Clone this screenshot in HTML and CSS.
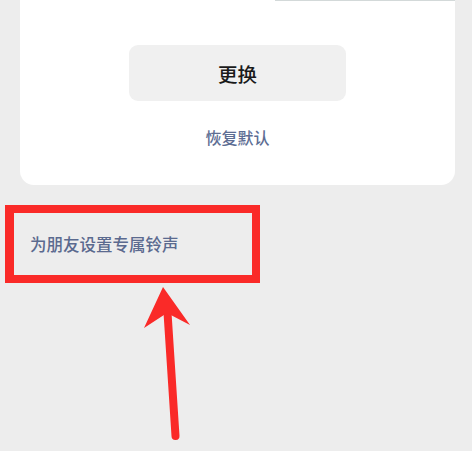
FILE: index.html
```html
<!DOCTYPE html>
<html lang="zh-CN">
<head>
<meta charset="utf-8">
<link rel="stylesheet" href="styles.css">
</head>
<body>
<div class="page">
  <div class="top-line"></div>
  <div class="card">
    <div class="btn">更换</div>
    <div class="reset">恢复默认</div>
  </div>
  <div class="friend">为朋友设置专属铃声</div>
  <div class="highlight"></div>
  <svg class="arrow" width="472" height="451" viewBox="0 0 472 451">
    <line x1="167" y1="305" x2="175.5" y2="436" stroke="#fa2a28" stroke-width="8" stroke-linecap="round"/>
    <polygon points="163,287 190,325 167,313 144,328" fill="#fa2a28"/>
  </svg>
</div>
</body>
</html>
```
FILE: styles.css
```css
html, body {
  margin: 0;
  padding: 0;
}
body {
  background: #ededed;
  font-family: "Noto Sans CJK SC", "Noto Sans", sans-serif;
}
.page {
  position: relative;
  width: 472px;
  height: 451px;
  overflow: hidden;
}
.top-line {
  position: absolute;
  top: 0;
  left: 275px;
  width: 180px;
  height: 1px;
  background: #d3d9d9;
}
.card {
  margin-left: 20px;
  width: 435px;
  height: 185px;
  box-sizing: border-box;
  background: #ffffff;
  border-radius: 0 0 14px 14px;
  padding-top: 45px;
  display: flex;
  flex-direction: column;
  align-items: center;
}
.btn {
  width: 217px;
  height: 56px;
  border-radius: 9px;
  background: #f0f0f0;
  color: #1a1a1a;
  font-size: 19.5px;
  font-weight: 500;
  display: flex;
  align-items: center;
  justify-content: center;
}
.reset {
  margin-top: 24px;
  font-size: 16px;
  line-height: 24px;
  font-weight: 500;
  color: #5d6d93;
}
.friend {
  padding: 47px 0 0 30px;
  font-size: 16.5px;
  line-height: 24px;
  font-weight: 500;
  color: #5b6a8f;
}
.highlight {
  position: absolute;
  left: 5px;
  top: 205px;
  width: 255px;
  height: 78px;
  box-sizing: border-box;
  border: 8px solid #fa2a28;
  border-left-width: 9px;
}
.arrow {
  position: absolute;
  left: 0;
  top: 0;
}
```
